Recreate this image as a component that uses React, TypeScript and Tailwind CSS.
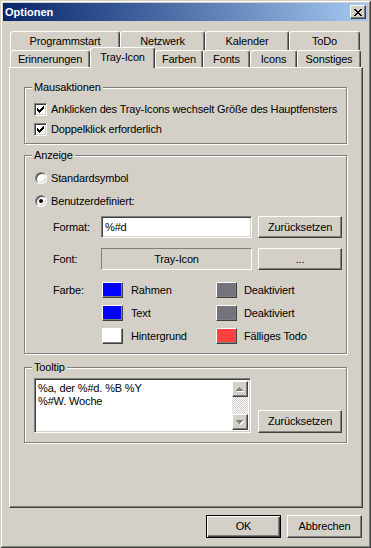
import React from 'react';

// classic Windows 3D edges
const raised =
  'border border-t-white border-l-white border-r-[#404040] border-b-[#404040] shadow-[inset_-1px_-1px_#808080] bg-[#d4d0c8]';
const sunken =
  'border border-t-[#808080] border-l-[#808080] border-r-white border-b-white shadow-[inset_1px_1px_#404040,inset_-1px_-1px_#d4d0c8]';

const ROW_BACK = [
  { label: 'Programmstart', w: 'w-[110px]' },
  { label: 'Netzwerk', w: 'w-[85px]' },
  { label: 'Kalender', w: 'w-[84px]' },
  { label: 'ToDo', w: 'w-[71px]' },
];

const ROW_FRONT = [
  { label: 'Erinnerungen', w: 'w-[80px]' },
  { label: 'Tray-Icon', w: 'w-[65px]', active: true },
  { label: 'Farben', w: 'w-[48px]' },
  { label: 'Fonts', w: 'w-[47px]' },
  { label: 'Icons', w: 'w-[47px]' },
  { label: 'Sonstiges', w: 'w-[64px]' },
];

const COLORS = [
  { left: { label: 'Rahmen', bg: 'bg-[#0000ff]' }, right: { label: 'Deaktiviert', bg: 'bg-[#74737b]' } },
  { left: { label: 'Text', bg: 'bg-[#0000ff]' }, right: { label: 'Deaktiviert', bg: 'bg-[#74737b]' } },
  { left: { label: 'Hintergrund', bg: 'bg-white' }, right: { label: 'Fälliges Todo', bg: 'bg-[#ff4040]' } },
];

function CloseGlyph() {
  return (
    <svg width="8" height="7" viewBox="0 0 8 7" shapeRendering="crispEdges">
      <path
        fill="#000"
        d="M0 0h2v1H0zM6 0h2v1H6zM1 1h2v1H1zM5 1h2v1H5zM2 2h4v1H2zM3 3h2v1H3zM2 4h4v1H2zM1 5h2v1H1zM5 5h2v1H5zM0 6h2v1H0zM6 6h2v1H6z"
      />
    </svg>
  );
}

function Check() {
  return (
    <svg width="7" height="7" viewBox="0 0 7 7" shapeRendering="crispEdges">
      <path
        fill="#000"
        d="M6 0h1v1H6zM5 1h2v1H5zM0 2h1v1H0zM4 2h3v1H4zM0 3h2v1H0zM3 3h3v1H3zM0 4h5v1H0zM1 5h3v1H1zM2 6h1v1H2z"
      />
    </svg>
  );
}

function Arrow({ down }: { down?: boolean }) {
  const d = down
    ? 'M0 0h7v1H0zM1 1h5v1H1zM2 2h3v1H2zM3 3h1v1H3z'
    : 'M3 0h1v1H3zM2 1h3v1H2zM1 2h5v1H1zM0 3h7v1H0z';
  return (
    <svg width="8" height="5" viewBox="0 0 8 5" shapeRendering="crispEdges">
      <path fill="#fff" transform="translate(1 1)" d={d} />
      <path fill="#808080" d={d} />
    </svg>
  );
}

function Checkbox({ label }: { label: string }) {
  return (
    <div className="flex items-center gap-[4px] h-[13px]">
      <div className={`${sunken} w-[13px] h-[13px] bg-white flex items-center justify-center`}>
        <Check />
      </div>
      <span>{label}</span>
    </div>
  );
}

function Radio({ label, checked }: { label: string; checked?: boolean }) {
  return (
    <div className="flex items-center gap-[4px] h-[12px]">
      <div className="w-[12px] h-[12px] rounded-full bg-white border border-t-[#808080] border-l-[#808080] border-r-white border-b-white shadow-[inset_1px_1px_#404040,inset_-1px_-1px_#d4d0c8] flex items-center justify-center">
        {checked && <div className="w-[4px] h-[4px] rounded-full bg-black" />}
      </div>
      <span>{label}</span>
    </div>
  );
}

function GroupBox({ title, className, children }: { title: string; className: string; children: React.ReactNode }) {
  return (
    <div className={`relative w-[323px] border border-[#808080] shadow-[inset_1px_1px_#fff,1px_1px_#fff] ${className}`}>
      <span className="absolute left-[7px] top-[-8px] px-[2px] bg-[#d4d0c8] leading-[14px]">{title}</span>
      {children}
    </div>
  );
}

function Tab({ label, w, active }: { label: string; w: string; active?: boolean }) {
  return (
    <div
      className={`${w} ${
        active ? 'h-[21px] -mb-px relative z-10 pb-[2px]' : 'h-full'
      } flex items-center justify-center bg-[#d4d0c8] border-t border-l border-r border-t-white border-l-white border-r-[#404040] rounded-t-[3px] shadow-[inset_-1px_0_#808080]`}
    >
      {label}
    </div>
  );
}

function Swatch({ label, bg, gap }: { label: string; bg: string; gap: string }) {
  return (
    <div className="flex items-center">
      <div className={`w-[21px] h-[16px] border border-t-white border-l-white border-r-[#404040] border-b-[#404040] shadow-[inset_-1px_-1px_#808080] ${bg}`} />
      <span className={gap}>{label}</span>
    </div>
  );
}

export default function App() {
  return (
    <div className="w-[371px] h-[548px] p-[3px] bg-[#d4d0c8] text-black text-[11px] tracking-[-0.15px] font-['Liberation_Sans',Arial,sans-serif] shadow-[inset_1px_1px_#d4d0c8,inset_-1px_-1px_#404040,inset_2px_2px_#fff,inset_-2px_-2px_#808080] overflow-hidden select-none">
      {/* Title bar */}
      <div className="h-[18px] flex items-center justify-between pl-[2px] pr-[2px] bg-gradient-to-r from-[#0a246a] to-[#a6caf0]">
        <span className="text-white font-bold tracking-normal">Optionen</span>
        <div className={`${raised} w-[16px] h-[14px] flex items-center justify-center`}>
          <CloseGlyph />
        </div>
      </div>

      <div className="ml-[6px] mt-[10px] w-[354px]">
        {/* Tabs */}
        <div className="flex h-[19px] pl-[1px]">
          {ROW_BACK.map((t) => (
            <Tab key={t.label} label={t.label} w={t.w} />
          ))}
        </div>
        <div className="flex items-end h-[17px] pl-[1px]">
          {ROW_FRONT.map((t) => (
            <Tab key={t.label} label={t.label} w={t.w} active={t.active} />
          ))}
        </div>

        {/* Tab page */}
        <div className="h-[441px] border border-t-white border-l-white border-r-[#404040] border-b-[#404040] shadow-[inset_-1px_-1px_#808080] pl-[14px] pt-[19px]">
          <GroupBox title="Mausaktionen" className="h-[57px] pt-[15px] pl-[9px]">
            <div className="flex flex-col gap-[7px]">
              <Checkbox label="Anklicken des Tray-Icons wechselt Größe des Hauptfensters" />
              <Checkbox label="Doppelklick erforderlich" />
            </div>
          </GroupBox>

          <GroupBox title="Anzeige" className="mt-[11px] h-[199px] pt-[16px] pl-[10px]">
            <Radio label="Standardsymbol" />
            <div className="mt-[11px]">
              <Radio label="Benutzerdefiniert:" checked />
            </div>

            <div className="ml-[18px] mt-[9px] flex items-center h-[22px]">
              <span className="w-[48px]">Format:</span>
              <div className={`${sunken} w-[151px] h-[22px] bg-white pl-[3px] flex items-center`}>%#d</div>
              <div className={`${raised} ml-[6px] w-[84px] h-[22px] flex items-center justify-center`}>Zurücksetzen</div>
            </div>

            <div className="ml-[18px] mt-[10px] flex items-center h-[22px]">
              <span className="w-[48px]">Font:</span>
              <div className="w-[151px] h-[22px] border border-t-[#808080] border-l-[#808080] border-r-white border-b-white flex items-center justify-center">
                Tray-Icon
              </div>
              <div className={`${raised} ml-[6px] w-[84px] h-[22px] flex items-center justify-center`}>...</div>
            </div>

            <div className="ml-[18px] mt-[12px] flex flex-col gap-[7px]">
              {COLORS.map((row, i) => (
                <div key={i} className="flex items-center h-[16px]">
                  <span className="w-[49px]">{i === 0 ? 'Farbe:' : ''}</span>
                  <div className="w-[114px]">
                    <Swatch label={row.left.label} bg={row.left.bg} gap="ml-[8px]" />
                  </div>
                  <Swatch label={row.right.label} bg={row.right.bg} gap="ml-[7px]" />
                </div>
              ))}
            </div>
          </GroupBox>

          <GroupBox title="Tooltip" className="mt-[13px] h-[76px] pt-[10px] pl-[9px]">
            <div className="flex items-end">
              <div className={`${sunken} w-[217px] h-[55px] bg-white flex p-[2px]`}>
                <div className="flex-1 leading-[13px] pl-[1px] pt-[1px]">
                  <div>%a, der %#d. %B %Y</div>
                  <div>%#W. Woche</div>
                </div>
                <div className="w-[16px] flex flex-col">
                  <div className={`${raised} h-[16px] flex items-center justify-center`}>
                    <Arrow />
                  </div>
                  <div className="flex-1 bg-[repeating-conic-gradient(#d4d0c8_0_25%,#ffffff_0_50%)] bg-[length:2px_2px]" />
                  <div className={`${raised} h-[16px] flex items-center justify-center`}>
                    <Arrow down />
                  </div>
                </div>
              </div>
              <div className={`${raised} ml-[7px] w-[84px] h-[23px] flex items-center justify-center`}>Zurücksetzen</div>
            </div>
          </GroupBox>
        </div>

        {/* Dialog buttons */}
        <div className="mt-[7px] flex justify-end gap-[6px] pr-[1px]">
          <div className="w-[75px] h-[23px] border border-black bg-[#d4d0c8] shadow-[inset_1px_1px_#fff,inset_-1px_-1px_#404040,inset_-2px_-2px_#808080] flex items-center justify-center">
            OK
          </div>
          <div className={`${raised} w-[75px] h-[23px] flex items-center justify-center`}>Abbrechen</div>
        </div>
      </div>
    </div>
  );
}
